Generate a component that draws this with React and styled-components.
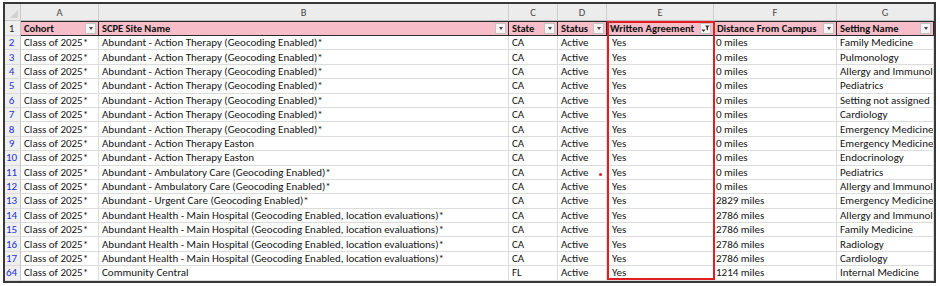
import React from 'react';
import styled, { createGlobalStyle } from 'styled-components';

const GlobalStyle = createGlobalStyle`
  html, body {
    margin: 0;
    padding: 0;
    background: #ffffff;
  }
  body {
    font-family: "Carlito", "Lato", "Liberation Sans", sans-serif;
  }
`;

const columns = ['A', 'B', 'C', 'D', 'E', 'F', 'G'];
const headers = ['Cohort', 'SCPE Site Name', 'State', 'Status', 'Written Agreement', 'Distance From Campus', 'Setting Name'];

const action = 'Abundant - Action Therapy (Geocoding Enabled)*';
const easton = 'Abundant - Action Therapy Easton';
const ambulatory = 'Abundant - Ambulatory Care (Geocoding Enabled)*';
const mainHospital = 'Abundant Health - Main Hospital (Geocoding Enabled, location evaluations)*';

const rows = [
    [2, action, 'CA', '0 miles', 'Family Medicine'],
    [3, action, 'CA', '0 miles', 'Pulmonology'],
    [4, action, 'CA', '0 miles', 'Allergy and Immunology'],
    [5, action, 'CA', '0 miles', 'Pediatrics'],
    [6, action, 'CA', '0 miles', 'Setting not assigned'],
    [7, action, 'CA', '0 miles', 'Cardiology'],
    [8, action, 'CA', '0 miles', 'Emergency Medicine'],
    [9, easton, 'CA', '0 miles', 'Emergency Medicine'],
    [10, easton, 'CA', '0 miles', 'Endocrinology'],
    [11, ambulatory, 'CA', '0 miles', 'Pediatrics'],
    [12, ambulatory, 'CA', '0 miles', 'Allergy and Immunology'],
    [13, 'Abundant - Urgent Care (Geocoding Enabled)*', 'CA', '2829 miles', 'Emergency Medicine'],
    [14, mainHospital, 'CA', '2786 miles', 'Allergy and Immunology'],
    [15, mainHospital, 'CA', '2786 miles', 'Family Medicine'],
    [16, mainHospital, 'CA', '2786 miles', 'Radiology'],
    [17, mainHospital, 'CA', '2786 miles', 'Cardiology'],
    [64, 'Community Central', 'FL', '1214 miles', 'Internal Medicine'],
];

function FilterButton({ active }) {
    return (
        <DropButton>
            {active ? (
                <svg width="9" height="8" viewBox="0 0 9 8">
                    <path d="M0.5 4.5 L2.5 7 L4.5 4.5 Z" fill="#333" />
                    <path d="M4 0.5 H8.5 L7 2.5 V5.5 L5.6 4.6 V2.5 Z" fill="#333" />
                </svg>
            ) : (
                <Caret />
            )}
        </DropButton>
    );
}

function App() {
    return (
        <>
            <GlobalStyle />
            <Frame>
                <Sheet>
                    <Corner />
                    {columns.map((c) => (
                        <ColLetter key={c}>{c}</ColLetter>
                    ))}

                    <RowNum $header>1</RowNum>
                    {headers.map((h, i) => (
                        <HeaderCell key={h}>
                            <span>{h}</span>
                            <FilterButton active={i === 4} />
                        </HeaderCell>
                    ))}

                    {rows.map(([n, site, state, dist, setting]) => (
                        <React.Fragment key={n}>
                            <RowNum>{n}</RowNum>
                            <Cell>Class of 2025*</Cell>
                            <Cell>{site}</Cell>
                            <Cell>{state}</Cell>
                            <Cell>Active</Cell>
                            <Cell $pad={5}>Yes</Cell>
                            <Cell $pad={2}>{dist}</Cell>
                            <Cell>{setting}</Cell>
                        </React.Fragment>
                    ))}
                </Sheet>
                <Highlight />
                <CommentDot />
            </Frame>
        </>
    );
}

const Frame = styled.div`
    position: relative;
    width: 929px;
    height: 277px;
    margin: 2px 0 0 3px;
    border: 2px solid #383838;
    overflow: hidden;
    font-size: 11px;
    color: #141414;
`;

const Sheet = styled.div`
    display: grid;
    grid-template-columns: 16px 78px 410px 49px 49px 107px 123px 1fr;
    grid-template-rows: 17px 15px repeat(17, 14.4px);
`;

const Corner = styled.div`
    position: relative;
    background: #e9e9e9;
    border-right: 1px solid #c9c9c9;
    border-bottom: 1px solid #c9c9c9;
    &::after {
        content: '';
        position: absolute;
        right: 2px;
        bottom: 2px;
        border-left: 8px solid transparent;
        border-bottom: 8px solid #d2d2d2;
    }
`;

const ColLetter = styled.div`
    display: flex;
    align-items: center;
    justify-content: center;
    background: #ececec;
    color: #4a4a4a;
    border-right: 1px solid #cfcfcf;
    border-bottom: 1px solid #bdbdbd;
    font-size: 10.5px;
`;

const RowNum = styled.div`
    display: flex;
    align-items: center;
    justify-content: center;
    padding-right: 2px;
    background: #efefef;
    color: ${(p) => (p.$header ? '#222' : '#2430d4')};
    border-right: 1px solid #c4c4c4;
    border-bottom: 1px solid #dadada;
    white-space: nowrap;
`;

const HeaderCell = styled.div`
    display: flex;
    align-items: center;
    justify-content: space-between;
    padding: 0 2px 0 3px;
    background: #f7bdc8;
    font-size: 10.5px;
    font-weight: bold;
    color: #111;
    border-top: 1px solid #2a2a2a;
    border-right: 1px solid #2a2a2a;
    border-bottom: 1px solid #2a2a2a;
    white-space: nowrap;
    overflow: hidden;
    &:nth-child(9) {
        border-left: 1px solid #2a2a2a;
    }
`;

const DropButton = styled.div`
    display: flex;
    align-items: center;
    justify-content: center;
    flex: none;
    width: 9px;
    height: 9px;
    background: #f4f4f4;
    border: 1px solid #c3c3c3;
`;

const Caret = styled.div`
    width: 0;
    height: 0;
    border-left: 2.5px solid transparent;
    border-right: 2.5px solid transparent;
    border-top: 3px solid #444;
`;

const Cell = styled.div`
    display: flex;
    align-items: center;
    padding-left: ${(p) => p.$pad ?? 3}px;
    border-right: 1px solid #dcdcdc;
    border-bottom: 1px solid #dcdcdc;
    white-space: nowrap;
    overflow: hidden;
`;

const Highlight = styled.div`
    position: absolute;
    left: 602px;
    top: 17px;
    width: 104px;
    height: 255px;
    border: 2px solid #e01e24;
    pointer-events: none;
`;

const CommentDot = styled.div`
    position: absolute;
    left: 594px;
    top: 169px;
    width: 3px;
    height: 3px;
    border-radius: 50%;
    background: #e01e24;
`;

export default App;
